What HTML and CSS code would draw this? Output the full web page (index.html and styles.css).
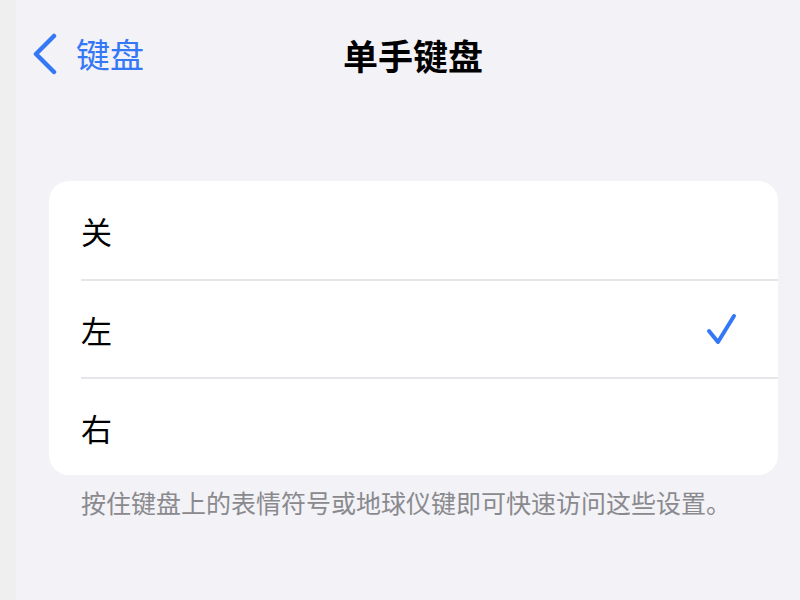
FILE: index.html
```html
<!DOCTYPE html>
<html lang="zh-CN">
<head>
<meta charset="utf-8">
<link rel="stylesheet" href="styles.css">
</head>
<body>
<div class="strip"></div>
<main class="page">
  <header class="nav">
    <div class="back">
      <svg class="chevron" width="26" height="42" viewBox="0 0 26 42"><polyline points="21,3 3,21 21,39" fill="none" stroke="#3478f6" stroke-width="4.5" stroke-linecap="round" stroke-linejoin="round"/></svg>
      <span class="back-label">键盘</span>
    </div>
    <h1 class="title">单手键盘</h1>
    <div class="spacer"></div>
  </header>
  <section class="card">
    <div class="row"><span class="label">关</span></div>
    <div class="row"><span class="label">左</span>
      <svg class="check" width="36" height="36" viewBox="0 0 36 36"><polyline points="7,20 16,31 32,5" fill="none" stroke="#3478f6" stroke-width="4" stroke-linecap="round" stroke-linejoin="round"/></svg>
    </div>
    <div class="row"><span class="label">右</span></div>
  </section>
  <p class="footer">按住键盘上的表情符号或地球仪键即可快速访问这些设置。</p>
</main>
</body>
</html>
```
FILE: styles.css
```css
* { box-sizing: border-box; }
html, body { margin: 0; height: 100%; }
body {
  display: flex;
  background: #f2f2f7;
  font-family: "Noto Sans CJK SC", "Noto Sans", sans-serif;
  overflow: hidden;
}
.strip {
  width: 16px;
  flex: none;
  background: #efeff0;
}
.page {
  flex: 1;
  display: flex;
  flex-direction: column;
  padding: 0 22px 0 33px;
}
.nav {
  display: grid;
  grid-template-columns: 1fr auto 1fr;
  align-items: center;
  height: 54px;
  margin-top: 27px;
  margin-left: -17px;
}
.back {
  display: flex;
  align-items: center;
  gap: 17px;
}
.chevron { display: block; margin-left: 1px; }
.back-label {
  color: #3478f6;
  font-size: 34px;
  line-height: 1;
}
.title {
  margin: 0;
  font-size: 35px;
  font-weight: 700;
  color: #000;
  line-height: 1;
  padding-left: 16px;
}
.card {
  margin-top: 100px;
  background: #fff;
  border-radius: 20px;
  overflow: hidden;
}
.row {
  height: 98px;
  margin-left: 32px;
  padding-right: 40px;
  display: flex;
  align-items: center;
  justify-content: space-between;
  border-top: 2px solid #e6e6ea;
}
.row:first-child { border-top: none; }
.label {
  font-size: 31px;
  color: #000;
  line-height: 1;
}
.check { display: block; }
.footer {
  margin: 10px 0 0 32px;
  font-size: 25px;
  line-height: 34px;
  color: #8a8a8e;
}
```
